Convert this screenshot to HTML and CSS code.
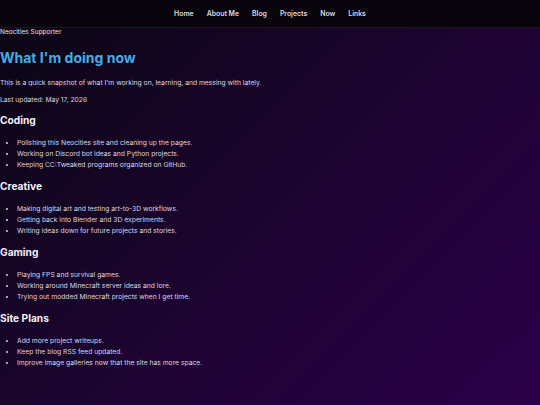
FILE: index.html
```html
<!DOCTYPE html>
<html lang="en">
  <head>
    <meta charset="UTF-8" />
    <meta name="viewport" content="width=device-width, initial-scale=1.0" />
    <title>Now</title>
    <link rel="stylesheet" href="styles.css">
  </head>
  <body>
    <nav class="topnav">
      <a href="#">Home</a>
      <a href="#">About Me</a>
      <a href="#">Blog</a>
      <a href="#">Projects</a>
      <a href="#">Now</a>
      <a href="#">Links</a>
    </nav>

    <div class="supporter">Neocities Supporter</div>

    <main class="content">
      <h1>What I'm doing now</h1>
      <p>This is a quick snapshot of what I'm working on, learning, and messing with lately.</p>
      <p class="updated">Last updated: May 17, 2026</p>

      <h2>Coding</h2>
      <ul>
        <li>Polishing this Neocities site and cleaning up the pages.</li>
        <li>Working on Discord bot ideas and Python projects.</li>
        <li>Keeping CC:Tweaked programs organized on GitHub.</li>
      </ul>

      <h2>Creative</h2>
      <ul>
        <li>Making digital art and testing art-to-3D workflows.</li>
        <li>Getting back into Blender and 3D experiments.</li>
        <li>Writing ideas down for future projects and stories.</li>
      </ul>

      <h2>Gaming</h2>
      <ul>
        <li>Playing FPS and survival games.</li>
        <li>Working around Minecraft server ideas and lore.</li>
        <li>Trying out modded Minecraft projects when I get time.</li>
      </ul>

      <h2>Site Plans</h2>
      <ul>
        <li>Add more project writeups.</li>
        <li>Keep the blog RSS feed updated.</li>
        <li>Improve image galleries now that the site has more space.</li>
      </ul>
    </main>
  </body>
</html>
```

FILE: styles.css
```css
html,
body {
  margin: 0;
  padding: 0;
  min-height: 100%;
}

body {
  font-family: Inter, "Noto Sans", sans-serif;
  color: #e6e2ea;
  background: linear-gradient(135deg, #0a0612 0%, #1c0430 50%, #2b0049 100%);
  background-attachment: fixed;
  min-height: 100vh;
}

.topnav {
  display: flex;
  justify-content: center;
  align-items: center;
  gap: 13px;
  height: 27px;
  background: #08050c;
  border-bottom: 1px solid #1b1322;
}

.topnav a {
  color: #dcd8e0;
  text-decoration: none;
  font-size: 6.9px;
  font-weight: 600;
}

.supporter {
  font-size: 6.5px;
  line-height: 8px;
  color: #e8e4ec;
}

h1 {
  margin: 12px 0 0;
  font-size: 14px;
  line-height: 19px;
  font-weight: 700;
  color: #45ade6;
}

p {
  font-size: 6.75px;
  line-height: 9px;
  margin: 11px 0 0;
  color: #dcd6e2;
}

p.updated {
  margin: 8px 0 2px;
}

h2 {
  font-size: 10.2px;
  line-height: 13px;
  font-weight: 700;
  color: #f2eef6;
  margin: 10px 0 0;
}

ul {
  margin: 10px 0 0;
  padding-left: 17px;
}

li {
  font-size: 6.75px;
  line-height: 11px;
  color: #dcd6e2;
}
```
